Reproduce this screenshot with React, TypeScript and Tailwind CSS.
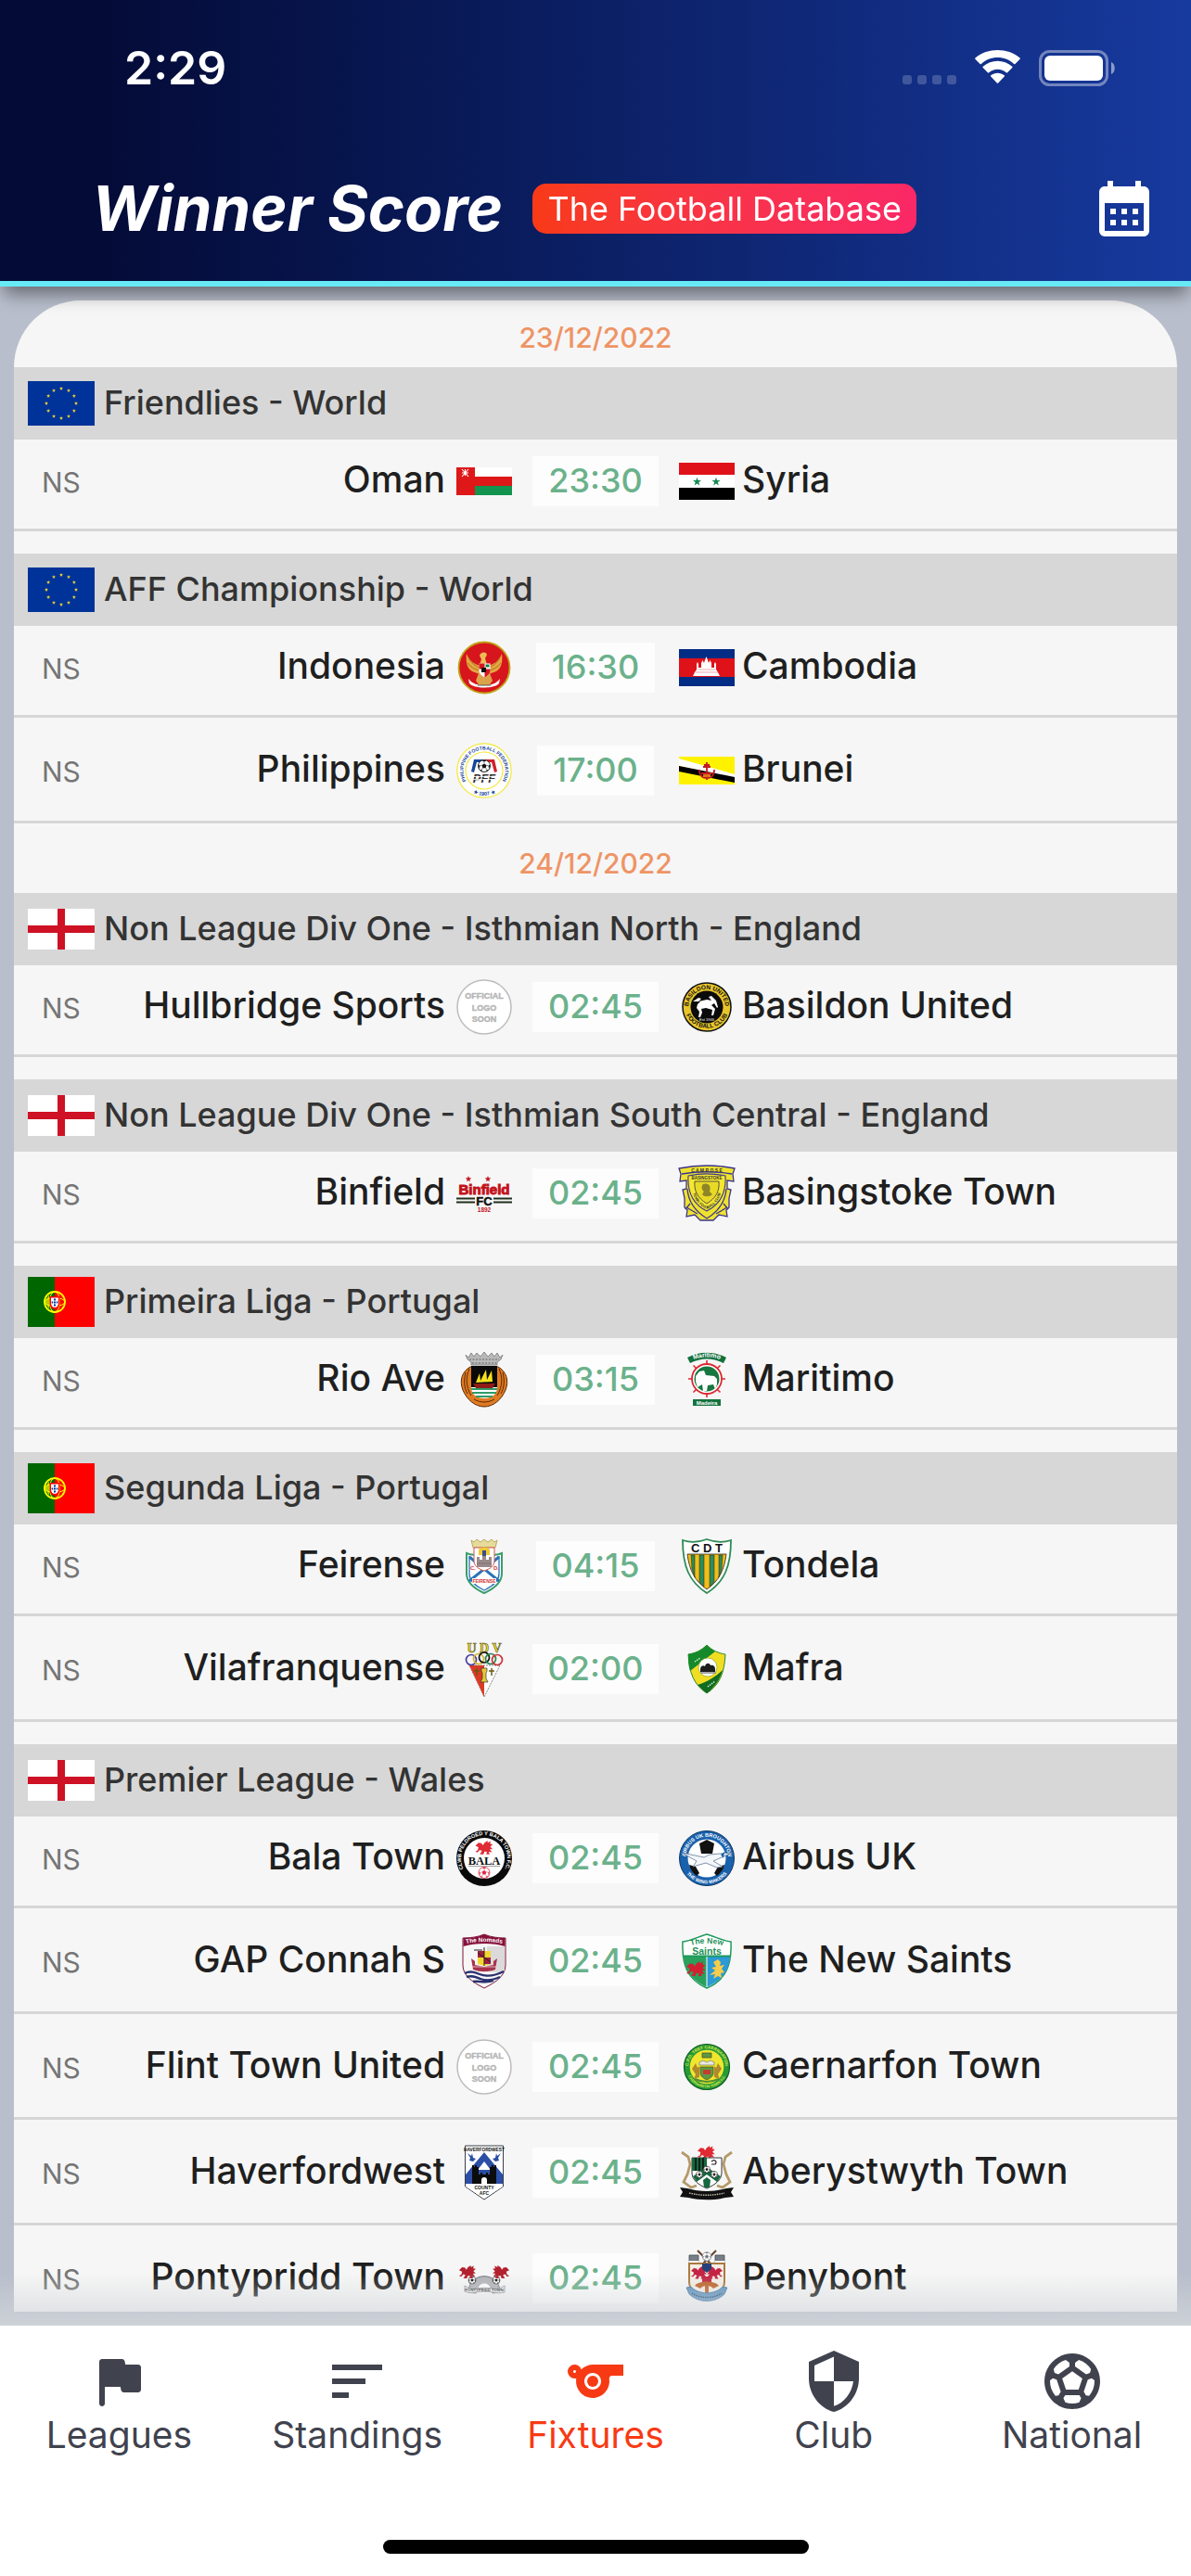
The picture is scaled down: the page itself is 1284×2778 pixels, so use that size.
import { useId, type ReactNode } from "react";
import { MdCalendarMonth, MdSecurity, MdSort, MdSports, MdSportsSoccer } from "react-icons/md";

/* ---------- drawing helpers ---------- */

function starPoints(cx: number, cy: number, r: number) {
  return Array.from({ length: 10 }, (_, i) => {
    const radius = i % 2 === 0 ? r : r * 0.4;
    const angle = (Math.PI / 5) * i - Math.PI / 2;
    return `${(cx + radius * Math.cos(angle)).toFixed(2)},${(cy + radius * Math.sin(angle)).toFixed(2)}`;
  }).join(" ");
}

function Star({ cx, cy, r, fill }: { cx: number; cy: number; r: number; fill: string }) {
  return <polygon points={starPoints(cx, cy, r)} fill={fill} />;
}

function ArcText({ d, size, fill, children }: { d: string; size: number; fill: string; children: string }) {
  const id = useId();
  return (
    <>
      <path id={id} d={d} fill="none" />
      <text fontSize={size} fontWeight="700" fontFamily="Liberation Sans, sans-serif" fill={fill} textAnchor="middle">
        <textPath href={`#${id}`} startOffset="50%">
          {children}
        </textPath>
      </text>
    </>
  );
}

function Ball({ cx, cy, r, ink = "#111" }: { cx: number; cy: number; r: number; ink?: string }) {
  return (
    <g transform={`translate(${cx} ${cy}) scale(${r / 10})`}>
      <circle r="10" fill="#fff" stroke={ink} strokeWidth="1.4" />
      <path d="M0-4 4-1.2 2.4 3.4H-2.4L-4-1.2z" fill={ink} />
      <path d="M-4-9.2h8L0-6.8zM9.6-2.5 6.8 0l1.4 5.4zM-9.6-2.5-6.8 0l-1.4 5.4zM2.8 9.4 4 6.4l4 .4zM-2.8 9.4-4 6.4l-4 .4z" fill={ink} />
      <path d="M0-4v-3M4-1.2 7-.4M2.4 3.4l1.8 3M-2.4 3.4l-1.8 3M-4-1.2-7-.4" stroke={ink} strokeWidth=".8" />
    </g>
  );
}

function Dragon({ x, y, scale = 1, flip = false, fill }: { x: number; y: number; scale?: number; flip?: boolean; fill: string }) {
  return (
    <g transform={`translate(${x} ${y}) scale(${flip ? -scale : scale} ${scale})`} fill={fill}>
      <path d="M0 5 3 2 6 2.4 7.4 4.6 9 2 12 0 12 2 15 .4 14.4 3 17 3.6 14.6 6 17 8.4 14 8.4 16.4 11.4 13 11 14 13.4H10.6L11.4 11 8.8 10.6 8 13.4H4.4L6.4 10 4.4 9 2 11.6 0 10.6 2.4 9.4 3 6.4z" />
    </g>
  );
}

/* ---------- country flags (72 wide) ---------- */

function WorldFlag() {
  return (
    <svg viewBox="0 0 72 48" className="w-[72px] shrink-0" aria-hidden="true">
      <rect width="72" height="48" fill="#039" />
      {Array.from({ length: 12 }, (_, i) => (
        <Star key={i} cx={36 + 16 * Math.sin((i * Math.PI) / 6)} cy={24 - 16 * Math.cos((i * Math.PI) / 6)} r={2.2} fill="#f2d22e" />
      ))}
    </svg>
  );
}

function EnglandFlag() {
  return (
    <svg viewBox="0 0 72 44" className="w-[72px] shrink-0" aria-hidden="true">
      <rect width="72" height="44" fill="#fff" />
      <path d="M32 0h8v44h-8z" fill="#ce1124" />
      <path d="M0 18h72v8H0z" fill="#ce1124" />
    </svg>
  );
}

function PortugalFlag() {
  return (
    <svg viewBox="0 0 72 54" className="w-[72px] shrink-0" aria-hidden="true">
      <path fill="#060" d="M0 0h29v54H0z" />
      <path fill="red" d="M29 0h43v54H29z" />
      <circle cx="29" cy="27" r="11" fill="none" stroke="#ff0" strokeWidth="1.8" />
      <ellipse cx="29" cy="27" rx="11" ry="4.5" fill="none" stroke="#ff0" strokeWidth="1" />
      <ellipse cx="29" cy="27" rx="5.5" ry="11" fill="none" stroke="#ff0" strokeWidth="1" />
      <path d="M18.5 27 23 19v16z" fill="#ff0" opacity=".7" />
      <path d="M23.5 21h11v8a5.5 6 0 0 1-11 0z" fill="red" />
      <path d="M25 22.5h8v6a4 4.5 0 0 1-8 0z" fill="#fff" />
      <path d="M28 23.5h2v2h-2zM28 26.5h2v2h-2zM28 29.5h2v2h-2zM25.6 26.5h1.6v2h-1.6zM30.8 26.5h1.6v2h-1.6z" fill="#039" />
    </svg>
  );
}

/* ---------- team crests (60 x 60) ---------- */

const crests: Record<string, ReactNode> = {
  oman: (
    <>
      <path fill="#fff" d="M0 15h60v10H0z" />
      <path fill="#de1719" d="M0 25h60v10H0z" />
      <path fill="#12934f" d="M0 35h60v10H0z" />
      <path fill="#de1719" d="M0 15h20v30H0z" />
      <path d="M6 17l7 8M13 17l-7 8M9.5 17v7M6 21h7" stroke="#fff" strokeWidth="1.1" />
    </>
  ),
  syria: (
    <>
      <path fill="#e01219" d="M0 10h60v13H0z" />
      <path fill="#fff" d="M0 23h60v14H0z" />
      <path d="M0 37h60v13H0z" />
      <Star cx={19.5} cy={30.5} r={4.8} fill="#158a52" />
      <Star cx={40} cy={30.5} r={4.8} fill="#158a52" />
    </>
  ),
  indonesia: (
    <>
      <circle cx="30" cy="30" r="27.5" fill="#d7151d" stroke="#c0a419" strokeWidth="1.8" />
      <path d="M11 15c-1 8 0 16 6 19l8 3 2-9c-7-1-13-5-16-13zM49 15c1 8 0 16-6 19l-8 3-2-9c7-1 13-5 16-13z" fill="#e5a741" />
      <path d="M13 19c3 6 7 9 12 11M12 25c3 4 8 7 12 8M47 19c-3 6-7 9-12 11M48 25c-3 4-8 7-12 8" stroke="#b36d1e" strokeWidth="1" fill="none" />
      <path d="M25 17c1-4 7-5 8-1l-2 4 2 7h-8l2-6z" fill="#eebb55" />
      <path d="M24 36h12l3 8-5 7h-8l-5-7z" fill="#dca24a" />
      <path d="M24.5 25.5h12v8c0 4-6 7-6 7s-6-3-6-7z" fill="#fff" />
      <path d="M24.5 25.5h6v6h-6z" fill="#d7151d" />
      <path d="M30.5 31.5h6v2c0 4-6 7-6 7z" fill="#d7151d" />
      <path d="M31.5 26.5h4v3h-4z" fill="#168146" />
      <path d="M27 30h5v5h-5z" fill="#111" />
      <path d="M13 42c5 6 10 7 17 7s12-1 17-7l-1 5c-5 6-27 6-32 0z" fill="#fff" />
      <path d="M23 49h14" stroke="#555" strokeWidth="1" />
    </>
  ),
  cambodia: (
    <>
      <path fill="#032c84" d="M0 10h60v40H0z" />
      <path fill="#e01219" d="M0 20h60v20H0z" />
      <path d="M15 39l2-4 2-3v-6l1-2 1 2v4h3v-5l1.500-3 1.500 3 1-3 1.500-4 1.500 4 1 3 1.500-3 1.500 3v5h3v-4l1-2 1 2v6l2 3 2 4z" fill="#fff" />
      <path d="M18 35h24M21 32h18" stroke="#e9848a" strokeWidth=".7" />
    </>
  ),
  philippines: (
    <>
      <circle cx="30" cy="30" r="29.2" fill="#fff" stroke="#f2e83b" strokeWidth="1.2" />
      <circle cx="30" cy="30" r="20" fill="none" stroke="#f2e83b" strokeWidth="1.2" />
      <ArcText d="M12.6 44.3A22.500 22.500 0 1 1 47.4 44.3" size={5.2} fill="#17459b">
        PHILIPPINE FOOTBALL FEDERATION
      </ArcText>
      <ArcText d="M10 48A27 27 0 0 0 50 48" size={5.5} fill="#17459b">
        ★ 1907 ★
      </ArcText>
      <path d="M16 31l3-13h10v3h-7l-3 11z" fill="#17459b" />
      <path d="M44 31l-3-13H31v3h7l3 11z" fill="#d21f2d" />
      <Ball cx={30} cy={25} r={6.5} />
      <text x="30" y="43" textAnchor="middle" fontFamily="Liberation Sans, sans-serif" fontSize="13" fontWeight="700" fontStyle="italic" fill="#333">
        PFF
      </text>
      <path d="M18 36.500h25M18 39.500h25" stroke="#fff" strokeWidth=".8" />
    </>
  ),
  brunei: (
    <>
      <path fill="#fef200" d="M0 15h60v30H0z" />
      <path fill="#fff" d="M0 17l60 17v4L0 25z" />
      <path d="M0 25l60 12v6L0 31z" />
      <path d="M30 21v14M26 26h8M22 29c0 6 3 9 8 9s8-3 8-9M24 33h12M27 24h6M30 38v2" stroke="#c41a20" strokeWidth="1.8" fill="none" />
      <path d="M26 34h8v3h-8z" fill="#e0701a" />
    </>
  ),
  soon: (
    <>
      <circle cx="30" cy="30" r="29" fill="#fff" stroke="#bcbcbc" strokeWidth="1.5" />
      <g fill="#b5b5b5" stroke="#b5b5b5" strokeWidth=".4" fontFamily="Liberation Sans, sans-serif" fontSize="9" fontWeight="700" textAnchor="middle">
        <text x="30" y="21">OFFICIAL</text>
        <text x="30" y="33.5">LOGO</text>
        <text x="30" y="46">SOON</text>
      </g>
    </>
  ),
  basildon: (
    <>
      <circle cx="30" cy="30" r="26" fill="#e8c52b" stroke="#111" strokeWidth="1.5" />
      <ArcText d="M12 39.5A20 20 0 1 1 48 39.5" size={6.5} fill="#111">
        BASILDON UNITED
      </ArcText>
      <ArcText d="M6.8 36A24.500 24.500 0 0 0 53.2 36" size={6.5} fill="#111">
        FOOTBALL CLUB
      </ArcText>
      <circle cx="30" cy="30" r="17.5" fill="#0b0b0b" />
      <path d="M15 24l6-4 3 1-3 3 9-2 5 1-3-4 3-1 5 5 2 7-1 1-3-5-3 2 4 4-2 7h-2l1-6-7-2-5 1 1 4-2 5h-2l1-6-3-4 1-4 3-3z" fill="#fff" />
      <text x="30" y="45" textAnchor="middle" fontFamily="Liberation Sans, sans-serif" fontSize="4" fill="#fff">
        Est 1946
      </text>
    </>
  ),
  binfield: (
    <>
      <Star cx={13} cy={14.5} r={3.5} fill="#c3121c" />
      <Star cx={34} cy={14.5} r={3.5} fill="#c3121c" />
      <text x="30" y="30.5" textAnchor="middle" fontFamily="Liberation Sans, sans-serif" fontSize="15" fontWeight="700" fill="#c3121c" stroke="#c3121c" strokeWidth="1">
        Binfield
      </text>
      <text x="30" y="43" textAnchor="middle" fontFamily="Liberation Sans, sans-serif" fontSize="13" fontWeight="700" fill="#111" stroke="#111" strokeWidth=".5">
        FC
      </text>
      <path d="M0 35.500h20M40 35.500h20M0 39.500h20M40 39.500h20" stroke="#22301f" strokeWidth="2" />
      <text x="30" y="50" textAnchor="middle" fontFamily="Liberation Sans, sans-serif" fontSize="6.5" fontWeight="700" fill="#c3121c">
        1892
      </text>
    </>
  ),
  basingstoke: (
    <>
      <path d="M0 3c20-4 40-4 60 0l-2 6 1 8-7-1v9l4 1-2 9v10l-3 3 1 7-9-2-6 6H23l-6-6-9 2 1-7-3-3V35l-2-9 4-1v-9l-7 1 1-8z" fill="#efe22e" stroke="#3b3590" strokeWidth="1.3" />
      <path d="M3 9c18-3 36-3 54 0M9 25c1 14 8 24 21 32M51 25c-1 14-8 24-21 32M8 45l12 7M52 45l-12 7M12 41l-5 6M48 41l5 6" stroke="#3b3590" strokeWidth="1.3" fill="none" />
      <path d="M10 11c14-3 26-3 40 0 1 17-4 30-20 38C14 41 9 28 10 11z" fill="#f4e72f" stroke="#3b3590" strokeWidth="1.1" />
      <path d="M17 17c9 0 17 0 26 0 1 10-3 18-13 24-10-6-14-14-13-24z" fill="#e9d927" stroke="#444" strokeWidth=".9" />
      <path d="M26 20c6-2 9 2 7 8l3 3c-3 3-9 3-11 0l2-3c-3-2-3-6-1-8z" fill="#8d8526" />
      <text x="30" y="6.5" textAnchor="middle" fontFamily="Liberation Sans, sans-serif" fontSize="5" fontWeight="700" fill="#333">
        C A M R O S E
      </text>
      <text x="30" y="14.5" textAnchor="middle" fontFamily="Liberation Sans, sans-serif" fontSize="4.5" fontWeight="700" fill="#333">
        BASINGSTOKE
      </text>
      <ArcText d="M14 24C16 38 22 43 30 47 38 43 44 38 46 24" size={4} fill="#333">
        TOWN FOOTBALL CLUB
      </ArcText>
    </>
  ),
  rioave: (
    <>
      <path d="M10 3l3 3 3-5 3 4 3-4 4 4 4-5 4 5 4-4 3 4 3-4 3 5 3-3-2 5-4 3v3H16v-3l-4-3z" fill="#b9b9b9" stroke="#777" strokeWidth=".8" />
      <path d="M14 8h32M17 12h26" stroke="#666" strokeDasharray="2 1.5" strokeWidth="1.2" />
      <path d="M15 16C6 21 3 31 7 41c4 10 13 18 23 18s19-8 23-18c4-10 1-20-8-25z" fill="#e07b22" stroke="#5b2a08" strokeWidth="1" />
      <path d="M14 18c-4 9-4 19 2 29M10 22c-2 8-2 16 2 23M46 18c4 9 4 19-2 29M50 22c2 8 2 16-2 23M19 51c7 4 15 4 22 0" stroke="#5b2a08" strokeWidth="1" fill="none" />
      <path d="M16 15h28v23H16z" fill="#0a0a0a" />
      <path d="M16 38h28c0 8-6 12-14 12S16 46 16 38z" fill="#fff" />
      <path d="M16 40h28M17 44h26M21 48h18" stroke="#2f9c68" strokeWidth="1.8" />
      <path d="M21 33l4-10 1 8 6-12 1 11 5-10 1 12z" fill="#f6e31b" />
      <path d="M18 34h24l-3 5H21z" fill="#8e1d16" />
    </>
  ),
  maritimo: (
    <>
      <path d="M9 6C22-1 38-1 51 6l-3 6C36 6 24 6 12 12z" fill="#14713e" />
      <ArcText d="M11 10C24 4 36 4 49 10" size={7} fill="#fff">
        Marítimo
      </ArcText>
      <g stroke="#dd2730" strokeWidth="1.6">
        <path d="M30 9v40M10 29h40M15.500 14.500l29 29M44.500 14.500l-29 29" />
        <circle cx="30" cy="29" r="16" fill="#fff" strokeWidth="1.8" />
      </g>
      <circle cx="30" cy="29" r="13.5" fill="#18773f" />
      <path d="M18 26l4-5 5-1 2 5 9 1 3 3v6l-2 5-2-5-6 1-1 6h-4l-1-7-5 3-2-6z" fill="#fff" />
      <path d="M15 51h30v7H15z" fill="#14713e" />
      <text x="30" y="56.5" textAnchor="middle" fontFamily="Liberation Sans, sans-serif" fontSize="6" fontWeight="700" fill="#fff">
        Madeira
      </text>
    </>
  ),
  feirense: (
    <>
      <path d="M11 16c6 3 12 2 19-1 7 3 13 4 19 1v22c0 10-8 16-19 21-11-5-19-11-19-21z" fill="#fff" stroke="#3b9d6b" strokeWidth="2" />
      <path d="M14 19v19c0 8 6 13 16 18 10-5 16-10 16-18V19" fill="none" stroke="#2a73b8" strokeWidth="1.3" />
      <path d="M14 20l32 26M46 20L14 46" stroke="#2a73b8" strokeWidth="3" />
      <path d="M16 2l3 2 3-3 4 3 4-3 4 3 4-3 3 3 3-2-2 8H18z" fill="#e6db9a" stroke="#a99b4a" strokeWidth=".8" />
      <path d="M19 10h22v14c0 6-5 9-11 11-6-2-11-5-11-11z" fill="#fff" stroke="#d2544f" strokeWidth="1" />
      <path d="M24 12c3-3 9-3 12 0v6H24z" fill="#edcb35" />
      <path d="M28 13h4v8h-4z" fill="#3e4a8c" />
      <path d="M22 20h3v3h3v-4h4v4h3v-3h3v11H22z" fill="#9b8a8a" />
      <path d="M22 27h16" stroke="#6f5e5e" strokeWidth="1" strokeDasharray="1.5 1" />
      <path d="M17 43h26v6H17z" fill="#fff" />
      <g fontFamily="Liberation Sans, sans-serif" fontWeight="700" fill="#d62f2f" textAnchor="middle">
        <text x="18" y="34" fontSize="6">C.</text>
        <text x="43" y="34" fontSize="6">D.</text>
        <text x="30" y="48" fontSize="5">FEIRENSE</text>
      </g>
    </>
  ),
  tondela: (
    <>
      <path d="M4 2c9 3 18 2 26-1 8 3 17 4 26 1 0 28-7 45-26 57C11 47 4 30 4 2z" fill="#fff" stroke="#2e8b57" strokeWidth="1.8" />
      <path d="M9 17h42c-2 17-8 29-21 38C17 46 11 34 9 17z" fill="#f2bd17" stroke="#222" strokeWidth=".8" />
      <path d="M13 18h4v24l-3-9zM22 18h5v34l-5-5zM33 18h5v29l-5 5zM43 18h4l-1 15-3 9z" fill="#2e8b57" stroke="#222" strokeWidth=".5" />
      <text x="30" y="15" textAnchor="middle" fontFamily="Liberation Sans, sans-serif" fontSize="13" fontWeight="700" fill="#111">
        C D T
      </text>
    </>
  ),
  vilafranquense: (
    <>
      <text x="30" y="12" textAnchor="middle" fontFamily="Liberation Serif, serif" fontSize="14" fontWeight="700" fill="#eadb37" stroke="#5a5114" strokeWidth=".6">
        U D V
      </text>
      <path d="M14 26h33L30 60z" fill="#fff" stroke="#555" strokeWidth=".7" strokeDasharray="2 1" />
      <path d="M14 26h16v34z" fill="#dc3a23" />
      <path d="M27 29h6v3l-1 2v6l2 4h-8l2-4v-6l-1-2z" fill="#e5c935" stroke="#333" strokeWidth=".7" />
      <path d="M19 32h6M22 29v8M35 32h6M38 29v8" stroke="#6c5a14" strokeWidth="1.5" />
      <g fill="none" strokeWidth="1.7">
        <circle cx="16" cy="20" r="5.5" stroke="#4b40a0" />
        <circle cx="24" cy="19" r="5.5" stroke="#d8b431" />
        <circle cx="30" cy="17.5" r="5.5" stroke="#111" />
        <circle cx="37" cy="19" r="5.5" stroke="#27864f" />
        <circle cx="44" cy="20" r="5.5" stroke="#cf3038" />
      </g>
    </>
  ),
  mafra: (
    <>
      <path d="M30 4c6 6 13 9 20 10-1 20-6 33-20 42-14-9-19-22-20-42 7-1 14-4 20-10z" fill="#f1dd22" stroke="#2c8a2a" strokeWidth="1" />
      <path d="M30 4c3 3 6 5 9 7L12 32C10 26 10 20 10 14c7-1 14-4 20-10z" fill="#168a2b" />
      <path d="M47 31c-3 11-9 19-17 25-4-3-7-6-10-9 10-3 20-9 27-16z" fill="#116c22" />
      <circle cx="31" cy="28" r="10" fill="#fff" stroke="#7a9a2a" strokeWidth=".6" />
      <path d="M23 30c0-3 3-5 5-3 1-4 5-4 6-1 3-1 5 1 5 4v3H23z" fill="#1d1d1d" />
      <path d="M23 34h17" stroke="#888" strokeWidth="1.5" />
      <path d="M17 22l6-4M31 49l8-6" stroke="#e8f3e6" strokeWidth="1.3" strokeDasharray="1.5 1" />
    </>
  ),
  bala: (
    <>
      <circle cx="30" cy="30" r="30" fill="#0a0a0a" />
      <ArcText d="M12.3 47.7A25 25 0 1 1 47.7 47.7" size={5.6} fill="#fff">
        CLWB PELDROED Y BALA TOWN F.C.
      </ArcText>
      <circle cx="30" cy="30" r="22" fill="#fff" />
      <Dragon x={20.5} y={11} scale={1.1} fill="#de2b34" />
      <text x="30" y="37" textAnchor="middle" fontFamily="Liberation Serif, serif" fontSize="12.5" fontWeight="700" fill="#111">
        BALA
      </text>
      <path d="M13 38.500h34" stroke="#777" strokeWidth=".7" />
      <Ball cx={30} cy={45.5} r={6} ink="#de2b4a" />
    </>
  ),
  airbus: (
    <>
      <circle cx="30" cy="30" r="29.5" fill="#1961ad" stroke="#0b3765" strokeWidth="1" />
      <circle cx="30" cy="30" r="20.5" fill="#fff" />
      <ArcText d="M8.5 38A23 23 0 1 1 51.5 38" size={5.6} fill="#fff">
        AIRBUS UK BROUGHTON
      </ArcText>
      <ArcText d="M6 43A27.200 27.200 0 0 0 54 43" size={5.2} fill="#fff">
        THE WING MAKERS
      </ArcText>
      <path d="M22 14l8-4 8 4-2 11H24zM11 37l7 2 4 7-3 3c-4-3-7-7-8-12zM49 37l-7 2-4 7 3 3c4-3 7-7 8-12z" fill="#111" />
      <path d="M3 24l24 5 6-3 24-2-20 9 10 6-6 1-12-5-14 4 4-6z" fill="#f4f7fa" stroke="#6f87a3" strokeWidth=".9" />
      <path d="M45 26l4-3-1 7z" fill="#1961ad" />
    </>
  ),
  gap: (
    <>
      <path d="M7 5c8 0 16-1 23-4 7 3 15 4 23 4v29c0 11-9 18-23 25C16 52 7 45 7 34z" fill="#f7f5f5" stroke="#7a1638" strokeWidth="1" />
      <path d="M33 14h19v26c-4 3-11 2-19 1z" fill="#dcd9da" />
      <path d="M7.500 5c8 0 16-1 22.500-4 6.500 3 14.500 4 22.500 4v9C40 10 20 10 7.500 14z" fill="#86103a" />
      <ArcText d="M6 12C20 8 40 8 54 12" size={6.5} fill="#fff">
        The Nomads
      </ArcText>
      <path d="M23 19h14v14l-7 2-7-2z" fill="#f2d62e" />
      <path d="M23 19h7v7h-7zM30 26h7v7h-7z" fill="#a01e3e" />
      <path d="M19 18h9M30 15v20M23 21l14 10" stroke="#222" strokeWidth="1" />
      <path d="M16 27l4 3v4l10 2 10-2v-4l4-3-2 12c-8 3-16 3-24 0z" fill="#a8324c" />
      <path d="M17 36h26" stroke="#f0d3d8" strokeWidth=".8" />
      <path d="M9 43c6-3 11-1 16 1s14 3 26-3M11 47c6-2 10 0 15 2s12 2 21-2M18 52c6-1 14 2 22-1" stroke="#28306e" strokeWidth="2.4" fill="none" />
    </>
  ),
  tns: (
    <>
      <path d="M4 9c9-1 18-6 26-8 8 2 17 7 26 8 1 25-5 41-26 50C9 50 3 34 4 9z" fill="#fff" stroke="#1d9a5c" strokeWidth="1.5" />
      <path d="M5 25h25v33C13 50 6 40 5 25z" fill="#2aa05d" />
      <path d="M30 25h25c-1 15-8 25-25 33z" fill="#2b9ad6" />
      <path d="M5 24.500h50" stroke="#1d9a5c" strokeWidth="2" />
      <path d="M30 25v33" stroke="#fff" strokeWidth="1" />
      <Dragon x={8} y={30} scale={1.2} fill="#d31f2f" />
      <path d="M37 31l5-3 3 3-1 4 5-1-3 4 3 4-4 1 1 5-4-2-5 3 2-5-6 1 6-5-4-3 5-1z" fill="#f5cd4a" />
      <ArcText d="M5 16C20 9 40 9 55 16" size={8.5} fill="#1d8f56">
        The New
      </ArcText>
      <text x="30" y="22.5" textAnchor="middle" fontFamily="Liberation Sans, sans-serif" fontSize="10.5" fontWeight="700" fill="#1d8f56">
        Saints
      </text>
    </>
  ),
  caernarfon: (
    <>
      <circle cx="30" cy="30" r="24.5" fill="#259a36" stroke="#0e5a20" strokeWidth="1.2" />
      <ArcText d="M12 39A20 20 0 1 1 48 39" size={4.6} fill="#d9e84a">
        C.P.D. TREF CAERNARFON
      </ArcText>
      <ArcText d="M9 38A22.500 22.500 0 0 0 51 38" size={4} fill="#d9e84a">
        CAERNARFON TOWN F.C.
      </ArcText>
      <circle cx="30" cy="30" r="18.3" fill="#f0e62d" />
      <path d="M25 15h10v5H25zM23 30h14v7c0 4-7 7-7 7s-7-3-7-7z" fill="#5c9a45" stroke="#54551b" strokeWidth=".8" />
      <path d="M26 33h8v5h-8z" fill="#c63d2e" />
      <path d="M14 32l4-6 2 5 2-2v12l-6 2 2-5zM46 32l-4-6-2 5-2-2v12l6 2-2-5z" fill="#b2882e" />
      <path d="M22 25l4-2 4 2 4-2 4 2v3H22z" fill="#e8e8e0" stroke="#777" strokeWidth=".7" />
      <path d="M17 43c9 4 17 4 26 0" stroke="#4f8d36" strokeWidth="2" fill="none" />
    </>
  ),
  haverfordwest: (
    <>
      <path d="M9.500 1h41v44L30 59 9.500 45z" fill="#fff" stroke="#3a3f4a" strokeWidth="1" />
      <text x="30" y="6.5" textAnchor="middle" fontFamily="Liberation Sans, sans-serif" fontSize="4.8" fontWeight="700" fill="#111">
        HAVERFORDWEST
      </text>
      <path d="M30 8l20 24v10H10V32z" fill="#2b4ea6" />
      <path d="M30 18l7 9H23z" fill="#fff" />
      <path d="M12 9l4 3 1-3 1 5 3 1-3 3-4-1 1-3zM48 9l-4 3-1-3-1 5-3 1 3 3 4-1-1-3z" fill="#2b4ea6" />
      <path d="M17 22h2v2h1v-2h2v2h2v8h2v-2h2v2h4v-2h2v2h2v-8h2v-2h2v2h1v-2h2v20H17z" fill="#0c0c0c" />
      <path d="M27 42v-4a3 3 0 0 1 6 0v4z" fill="#fff" />
      <path d="M10 42h40v3L30 58 10 45z" fill="#fff" />
      <g fontFamily="Liberation Sans, sans-serif" fontWeight="700" fill="#111" textAnchor="middle">
        <text x="30" y="47.5" fontSize="5">COUNTY</text>
        <text x="30" y="54" fontSize="5">AFC</text>
      </g>
    </>
  ),
  aberystwyth: (
    <>
      <Dragon x={20} y={1} scale={1.1} fill="#e02a33" />
      <path d="M3 8l7 5 2 8-3 11-4 8 8 6 6-2M57 8l-7 5-2 8 3 11 4 8-8 6-6-2" stroke="#b59a68" strokeWidth="2.8" fill="none" />
      <path d="M14 14h32v16c0 8-7 13-16 17-9-4-16-9-16-17z" fill="#fff" stroke="#333" strokeWidth="1" />
      <path d="M14 14h16v14H14z" fill="#15683f" />
      <path d="M18 14v14M22 14v14M26 14v14" stroke="#111" strokeWidth="1.6" />
      <path d="M15 34l15-10 15 10-4 6-11-8-11 8z" fill="#15683f" />
      <path d="M26 38l4-3 4 3-1 8h-6z" fill="#15683f" />
      <Ball cx={30} cy={26.5} r={3.6} />
      <Ball cx={22} cy={32} r={3.6} />
      <Ball cx={38} cy={32} r={3.6} />
      <path d="M35 18c3-3 7 0 4 3h-4" stroke="#222" strokeWidth="1.2" fill="none" />
      <path d="M1 46l8 1c14 4 28 4 42 0l8-1-3 5 3 5-9 1c-13 3-27 3-40 0l-9-1 3-5z" fill="#111" />
      <path d="M11 52c13 3 25 3 38 0" stroke="#c9c1b0" strokeWidth="1.4" strokeDasharray="1.5 1" fill="none" />
    </>
  ),
  pontypridd: (
    <>
      <path d="M13 45C13 22 47 22 47 45l-8 1c0-12-18-12-18 0z" fill="#b4b5b9" stroke="#66686e" strokeWidth=".9" />
      <path d="M22 46c0-14 16-14 16 0z" fill="#fff" />
      <Ball cx={17} cy={32} r={4} />
      <Ball cx={43} cy={32} r={4} />
      <Dragon x={3} y={16} scale={1.05} fill="#b3212e" />
      <Dragon x={57} y={16} scale={1.05} flip fill="#b3212e" />
      <path d="M9 38c4 3 8 4 12 3 7-1 12-1 18 0 4 1 9 0 13-3v7c-5 1-9 1-13 0-6-1-12-1-18 0-4 1-8 1-12-1z" fill="#f3f3f4" stroke="#85878c" strokeWidth=".8" />
      <text x="30" y="44" textAnchor="middle" fontFamily="Liberation Sans, sans-serif" fontSize="4.2" fontWeight="700" fill="#333">
        PONTYPRIDD TOWN
      </text>
    </>
  ),
  penybont: (
    <>
      <path d="M20 0l20 20M40 0L20 20" stroke="#68402a" strokeWidth="2" />
      <path d="M11 5h10v6H11zM39 5h10v6H39z" fill="#777e87" stroke="#454b53" strokeWidth=".8" />
      <path d="M10 11h12l-1 3H11zM38 11h12l-1 3H39z" fill="#fff" stroke="#aaa" strokeWidth=".5" />
      <Ball cx={30} cy={6.5} r={4.8} ink="#70767d" />
      <path d="M11 14h38v20c0 9-8 14-19 18-11-4-19-9-19-18z" fill="#f3eee6" stroke="#a97a3c" strokeWidth="2" />
      <Dragon x={13} y={17} scale={1} fill="#c42343" />
      <Dragon x={47} y={17} scale={1} flip fill="#c42343" />
      <path d="M25 14h10v6l-5 4-5-4z" fill="#27407a" />
      <path d="M25 28h10v6l-5 4-5-4z" fill="#c42343" />
      <path d="M17 38c4-6 22-6 26 0l-6 3c-3-4-11-4-14 0z" fill="#bf6328" />
      <path d="M28 38h4v8h-4z" fill="#bf6328" />
      <path d="M8 40l5-1c8 9 26 9 34 0l5 1-3 7c-10 10-28 10-38 0z" fill="#5f93c0" stroke="#3d6d9a" strokeWidth=".8" />
      <path d="M14 46c8 6 24 6 32 0" stroke="#24425f" strokeWidth="1.5" strokeDasharray="1.5 1" fill="none" />
    </>
  ),
};

function Crest({ name }: { name: string }) {
  return (
    <svg viewBox="0 0 60 60" className="size-15 shrink-0 overflow-visible" aria-hidden="true">
      {crests[name]}
    </svg>
  );
}

/* ---------- data ---------- */

type Country = "World" | "England" | "Portugal" | "Wales";
type Match = { home: string; homeCrest: string; time: string; away: string; awayCrest: string };
type League = { title: string; country: Country; matches: Match[] };
type Day = { date: string; leagues: League[] };

const m = (home: string, homeCrest: string, time: string, away: string, awayCrest: string): Match => ({
  home,
  homeCrest,
  time,
  away,
  awayCrest,
});

const days: Day[] = [
  {
    date: "23/12/2022",
    leagues: [
      { title: "Friendlies", country: "World", matches: [m("Oman", "oman", "23:30", "Syria", "syria")] },
      {
        title: "AFF Championship",
        country: "World",
        matches: [
          m("Indonesia", "indonesia", "16:30", "Cambodia", "cambodia"),
          m("Philippines", "philippines", "17:00", "Brunei", "brunei"),
        ],
      },
    ],
  },
  {
    date: "24/12/2022",
    leagues: [
      {
        title: "Non League Div One - Isthmian North",
        country: "England",
        matches: [m("Hullbridge Sports", "soon", "02:45", "Basildon United", "basildon")],
      },
      {
        title: "Non League Div One - Isthmian South Central",
        country: "England",
        matches: [m("Binfield", "binfield", "02:45", "Basingstoke Town", "basingstoke")],
      },
      { title: "Primeira Liga", country: "Portugal", matches: [m("Rio Ave", "rioave", "03:15", "Maritimo", "maritimo")] },
      {
        title: "Segunda Liga",
        country: "Portugal",
        matches: [
          m("Feirense", "feirense", "04:15", "Tondela", "tondela"),
          m("Vilafranquense", "vilafranquense", "02:00", "Mafra", "mafra"),
        ],
      },
      {
        title: "Premier League",
        country: "Wales",
        matches: [
          m("Bala Town", "bala", "02:45", "Airbus UK", "airbus"),
          m("GAP Connah S", "gap", "02:45", "The New Saints", "tns"),
          m("Flint Town United", "soon", "02:45", "Caernarfon Town", "caernarfon"),
          m("Haverfordwest", "haverfordwest", "02:45", "Aberystwyth Town", "aberystwyth"),
          m("Pontypridd Town", "pontypridd", "02:45", "Penybont", "penybont"),
        ],
      },
    ],
  },
];

function CountryFlag({ country }: { country: Country }) {
  if (country === "World") return <WorldFlag />;
  if (country === "Portugal") return <PortugalFlag />;
  return <EnglandFlag />;
}

/* ---------- sections ---------- */

function StatusBar() {
  return (
    <div className="flex h-[146px] items-center justify-between pr-[82px] pl-[134px]">
      <span className="text-[50px] leading-none font-semibold">2:29</span>
      <div className="flex items-center gap-[19px]">
        <div className="flex gap-1.5 pt-[26px]">
          <span className="size-2.5 rounded-[3px] bg-white/20" />
          <span className="size-2.5 rounded-[3px] bg-white/20" />
          <span className="size-2.5 rounded-[3px] bg-white/20" />
          <span className="size-2.5 rounded-[3px] bg-white/20" />
        </div>
        <svg viewBox="0 0 51 38" className="h-[38px] w-[51px]" fill="#fff" aria-hidden="true">
          <path d="M25.5 8c6.8 0 13 2.6 17.7 7.1.3.3.9.3 1.2 0l5.2-5.3c.4-.4.4-1 0-1.3C36.2-2.8 14.8-2.8 1.4 8.500c-.4.3-.4.9 0 1.3l5.2 5.3c.3.3.9.3 1.2 0C12.5 10.6 18.7 8 25.5 8z" />
          <path d="M25.5 20.700c3.500 0 6.800 1.300 9.300 3.600.4.3.9.3 1.300 0l5.200-5.200c.4-.4.4-1 0-1.300-8.900-8.200-22.700-8.200-31.600 0-.4.4-.4 1 0 1.300l5.200 5.200c.4.3.9.3 1.300 0 2.500-2.300 5.800-3.600 9.300-3.600z" />
          <path d="M32.800 28.600c.4-.3.4-.9 0-1.300-4.200-3.500-10.400-3.500-14.600 0-.4.4-.4 1 0 1.300l6.600 6.900c.4.4 1 .4 1.400 0z" />
        </svg>
        <svg viewBox="0 0 82 39" className="h-[39px] w-[82px]" aria-hidden="true">
          <rect x="1.5" y="1.5" width="72" height="36" rx="10" fill="none" stroke="#fff" strokeOpacity=".4" strokeWidth="3" />
          <rect x="6" y="6" width="63" height="27" rx="6" fill="#fff" />
          <path d="M78 13c5 1.500 5 11.500 0 13z" fill="#fff" fillOpacity=".5" />
        </svg>
      </div>
    </div>
  );
}

function Header() {
  return (
    <header className="relative z-10 shrink-0 border-b-[6px] border-[#67eaf5] bg-linear-to-r from-[#040b37] from-8% to-[#173a9f] text-white shadow-[0_12px_18px_-4px_rgba(0,0,0,0.45)]">
      <StatusBar />
      <div className="flex h-[157px] items-center pr-9 pl-[99px]">
        <h1 className="text-[67px] leading-none font-bold whitespace-nowrap italic">Winner Score</h1>
        <span className="ml-8 rounded-[15px] bg-linear-to-r from-[#f83a16] to-[#fa2867] px-4 text-[36px] leading-[54px] whitespace-nowrap">
          The Football Database
        </span>
        <button type="button" aria-label="Choose date" className="ml-auto">
          <MdCalendarMonth className="size-18" />
        </button>
      </div>
    </header>
  );
}

function MatchRow({ match }: { match: Match }) {
  return (
    <li className="grid grid-cols-[1fr_180px_1fr] items-center border-b-[3px] border-[#d6d6d6] pt-[30px] pb-[27px] first:pt-[18px] first:pb-6">
      <div className="flex h-[54px] items-center pl-7.5">
        <span className="pt-0.5 text-[30px] leading-9 text-[#757575]">NS</span>
        <span className="mr-3 ml-auto pb-1 text-[39px] leading-11 font-medium whitespace-nowrap text-[#1f1f1f]">{match.home}</span>
        <Crest name={match.homeCrest} />
      </div>
      <time className="justify-self-center bg-[#fdfdfd] px-[17px] pb-0.5 text-[36px] leading-[52px] font-medium text-[#6bb18b]">
        {match.time}
      </time>
      <div className="flex h-[54px] items-center gap-2">
        <Crest name={match.awayCrest} />
        <span className="pb-1 text-[39px] leading-11 font-medium whitespace-nowrap text-[#1f1f1f]">{match.away}</span>
      </div>
    </li>
  );
}

function LeagueBlock({ league }: { league: League }) {
  return (
    <section className="mb-6 last:mb-0">
      <h3 className="flex h-[78px] items-center gap-2.5 bg-[#d7d7d7] px-[15px] text-[36px] leading-11 font-medium whitespace-nowrap text-[#333]">
        <CountryFlag country={league.country} />
        <span className="pb-0.5">
          {league.title} - {league.country}
        </span>
      </h3>
      <ul>
        {league.matches.map((match) => (
          <MatchRow key={match.home} match={match} />
        ))}
      </ul>
    </section>
  );
}

function FlagIcon() {
  return (
    <svg viewBox="0 0 24 24" className="size-18" fill="currentColor" aria-hidden="true">
      <path d="M14.4 6l-.24-1.2c-.09-.46-.5-.8-.98-.8H6c-.55 0-1 .45-1 1v15c0 .55.45 1 1 1s1-.45 1-1v-6h5.6l.24 1.2c.09.47.5.8.98.8H19c.55 0 1-.45 1-1V7c0-.55-.45-1-1-1h-4.6z" />
    </svg>
  );
}

const tabs = [
  { label: "Leagues", icon: <FlagIcon /> },
  { label: "Standings", icon: <MdSort className="size-18" /> },
  { label: "Fixtures", icon: <MdSports className="size-18" />, active: true },
  { label: "Club", icon: <MdSecurity className="size-18" /> },
  { label: "National", icon: <MdSportsSoccer className="size-18" /> },
];

function TabBar() {
  return (
    <nav className="flex h-[270px] shrink-0 flex-col justify-between bg-white pt-6 pb-6">
      <div className="grid grid-cols-5">
        {tabs.map((tab) => (
          <button
            key={tab.label}
            type="button"
            aria-current={tab.active ? "page" : undefined}
            className={
              tab.active
                ? "flex flex-col items-center text-[39px] leading-11 text-[#f73a14]"
                : "flex flex-col items-center text-[39px] leading-11 text-[#40424e]"
            }
          >
            {tab.icon}
            {tab.label}
          </button>
        ))}
      </div>
      <div className="h-[15px] w-[459px] self-center rounded-full bg-black" />
    </nav>
  );
}

export default function App() {
  return (
    <div className="flex h-screen flex-col bg-[#b9becc] font-['Inter',sans-serif]">
      <Header />
      <main className="relative min-h-0 flex-1 p-[15px]">
        <div className="h-full overflow-y-auto rounded-t-[72px] bg-[#f6f6f6] [scrollbar-width:none]">
          {days.map((day) => (
            <section key={day.date} className="mt-[3px] first:mt-0">
              <h2 className="pt-[22px] pb-3.5 text-center text-[30px] leading-9 font-medium text-[#ee9465]">{day.date}</h2>
              {day.leagues.map((league) => (
                <LeagueBlock key={league.title} league={league} />
              ))}
            </section>
          ))}
        </div>
        <div className="pointer-events-none absolute inset-x-0 bottom-0 h-14 bg-linear-to-b from-transparent to-[#d2d7d9]/80" />
      </main>
      <TabBar />
    </div>
  );
}
